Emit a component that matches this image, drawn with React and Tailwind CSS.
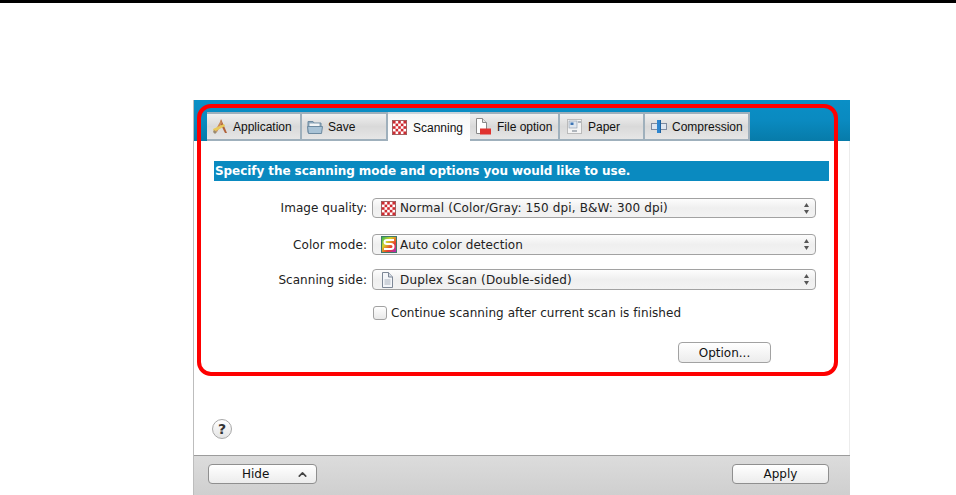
import { ChevronUp } from "lucide-react";

const uiFont = "font-['DejaVu_Sans',sans-serif]";

function CheckerIcon({ size = 15 }) {
  const cells = [];
  for (let y = 0; y < 5; y++) {
    for (let x = 0; x < 5; x++) {
      if ((x + y) % 2 === 0) cells.push(<rect key={`${x}-${y}`} x={1 + x * 2.8} y={1 + y * 2.8} width="2.8" height="2.8" fill="#cf2a30" />);
    }
  }
  return (
    <svg width={size} height={size} viewBox="0 0 16 16" className="shrink-0">
      <rect x="0.5" y="0.5" width="15" height="15" fill="#fff" stroke="#9a5a5a" />
      {cells}
    </svg>
  );
}

function AppIcon() {
  return (
    <svg width="17" height="17" viewBox="0 0 17 17" className="shrink-0">
      <path d="M9 1 L15 15 L13 15 L8 5 Z" fill="#b0623a" />
      <path d="M9 2 L3 13 L5 14 L10 5 Z" fill="#c98a5a" />
      <path d="M1 11 L12 6 L13 8 L2 14 Z" fill="#e8c95a" />
      <path d="M1 14 L3 16 L5 14 L2 12 Z" fill="#9c8a70" />
    </svg>
  );
}

function FolderIcon() {
  return (
    <svg width="16" height="14" viewBox="0 0 16 14" className="shrink-0">
      <path d="M1 3 V1.5 H6 L7 3 H14 V12.5 H1 Z" fill="#8fa9bd" stroke="#6d8aa0" />
      <rect x="2.5" y="3.5" width="10" height="3" fill="#f3f5f6" />
      <path d="M0.5 6.5 H15.5 L14.5 13.5 H1.5 Z" fill="#a9c3d6" stroke="#6d8aa0" />
    </svg>
  );
}

function FileIcon() {
  return (
    <svg width="16" height="17" viewBox="0 0 16 17" className="shrink-0">
      <path d="M1.5 0.5 H7.5 L11.5 4.5 V15.5 H1.5 Z" fill="#fff" stroke="#8a8a8a" />
      <path d="M7.5 0.5 V4.5 H11.5" fill="#e6e6e6" stroke="#8a8a8a" />
      <rect x="5" y="10.5" width="11" height="6" fill="#e0322e" />
    </svg>
  );
}

function PaperIcon() {
  return (
    <svg width="15" height="15" viewBox="0 0 15 15" className="shrink-0">
      <rect x="0.5" y="0.5" width="14" height="14" fill="#f4f4f4" stroke="#8c8c8c" strokeDasharray="1 1" />
      <rect x="2" y="2" width="8" height="7" fill="#dfe6ee" stroke="#8b98a8" strokeWidth="0.6" />
      <rect x="3.5" y="3.5" width="3" height="2.5" fill="#3c74b4" />
      <path d="M11 3 H14 M5 12 H10" stroke="#6d7885" />
    </svg>
  );
}

function CompressIcon() {
  return (
    <svg width="16" height="13" viewBox="0 0 16 13" className="shrink-0">
      <rect x="0.5" y="3.5" width="15" height="6" fill="#dfe6f0" stroke="#7c8aa0" />
      <rect x="6" y="0" width="4" height="13" fill="#2f86cf" />
      <rect x="9" y="0" width="1" height="13" fill="#1b5f9e" />
    </svg>
  );
}

function ColorIcon() {
  return (
    <svg width="16" height="17" viewBox="0 0 16 17" className="shrink-0">
      <defs>
        <linearGradient id="rainbow" x1="0" y1="0" x2="1" y2="1">
          <stop offset="0" stopColor="#1fb35a" />
          <stop offset="0.35" stopColor="#d4d42a" />
          <stop offset="0.65" stopColor="#ea3f2a" />
          <stop offset="1" stopColor="#a624d0" />
        </linearGradient>
      </defs>
      <rect x="0.5" y="0.5" width="15" height="16" fill="url(#rainbow)" stroke="#3f7a6a" />
      <path d="M13 4 H6 Q3.5 4 3.5 6 Q3.5 8 6 8 H10 Q12.5 8 12.5 10.5 Q12.5 13 10 13 H3" fill="none" stroke="#fff" strokeWidth="2" />
    </svg>
  );
}

function PageIcon() {
  return (
    <svg width="13" height="16" viewBox="0 0 13 16" className="shrink-0">
      <path d="M1.5 0.5 H7.5 L11.5 5 V15.5 H1.5 Z" fill="#f4f6f9" stroke="#7d8796" />
      <path d="M7.5 0.5 V5 H11.5" fill="#d4dae3" stroke="#7d8796" />
      <path d="M3.5 8 H9.5 M3.5 10 H9.5 M3.5 12 H9.5" stroke="#a9b1bd" />
    </svg>
  );
}

function Tab({ icon, label, width, gap, pl, active }) {
  return (
    <div
      className={`${width} ${gap} ${pl} h-[29px] flex items-center font-['Liberation_Sans',sans-serif] text-[12px] text-[#111] border-t-2 ${
        active
          ? "bg-gradient-to-b from-[#f6f6f6] to-white border-[#c9d3da]"
          : "bg-gradient-to-b from-[#f0f0f0] via-[#d9d9d9] to-[#e6e6e6] border-r-2 border-b-2 border-[#9fb0bc]"
      }`}
    >
      {icon}
      <span>{label}</span>
    </div>
  );
}

function Arrows() {
  return (
    <svg width="7" height="11" viewBox="0 0 7 11" className="shrink-0">
      <path d="M3.5 0 L6 4 H1 Z" fill="#555" />
      <path d="M3.5 11 L6 7 H1 Z" fill="#555" />
    </svg>
  );
}

function SelectRow({ label, icon, value, gap, height = "h-[20px]", valueClass = "", className = "" }) {
  return (
    <div className={`flex items-center ${uiFont} text-[12px] tracking-[0.06px] text-[#222] ${className}`}>
      <span className="w-[154px] text-right whitespace-nowrap">{label}</span>
      <div className={`ml-[5px] w-[444px] ${height} flex items-center ${gap} pl-[8px] pr-[5px] rounded-[4px] border border-[#a2a2a2] bg-gradient-to-b from-[#fdfdfd] via-[#efefef] to-[#f3f3f3]`}>
        {icon}
        <span className={`flex-1 whitespace-nowrap ${valueClass}`}>{value}</span>
        <Arrows />
      </div>
    </div>
  );
}

export default function App() {
  return (
    <div className="w-[956px] h-[495px] flex flex-col bg-white overflow-hidden">
      <div className="h-[3px] bg-black" />

      <div className="flex-1 pt-[97px] pl-[193px]">
        <div className="relative w-[657px] h-[395px] flex flex-col border-l border-[#bdbdbd] border-r-0">
          {/* Tab strip */}
          <div className="h-[41px] flex items-end pl-[13px] bg-gradient-to-b from-[#0a8fc6] via-[#0a8ac0] to-[#077ba9] shrink-0">
            <Tab icon={<AppIcon />} label="Application" width="w-[95px]" gap="gap-[4px]" pl="pl-[5px]" />
            <Tab icon={<FolderIcon />} label="Save" width="w-[86px]" gap="gap-[5px]" pl="pl-[5px]" />
            <Tab icon={<CheckerIcon />} label="Scanning" width="w-[82px]" gap="gap-[6px]" pl="pl-[4px]" active />
            <Tab icon={<FileIcon />} label="File option" width="w-[90px]" gap="gap-[6px]" pl="pl-[5px]" />
            <Tab icon={<PaperIcon />} label="Paper" width="w-[85px]" gap="gap-[6px]" pl="pl-[7px]" />
            <Tab icon={<CompressIcon />} label="Compression" width="w-[105px]" gap="gap-[5px]" pl="pl-[6px]" />
          </div>

          {/* Scanning panel */}
          <div className="flex-1 flex flex-col pt-[20px] pl-[20px] border-r border-[#ececec]">
            <div className={`w-[615px] h-[20px] flex items-center pl-[1px] bg-[#0a8ac0] text-white font-bold text-[12px] tracking-[-0.07px] whitespace-nowrap ${uiFont}`}>
              Specify the scanning mode and options you would like to use.
            </div>

            <div className="mt-[17px] flex flex-col gap-[15px] -ml-[1px]">
              <SelectRow label="Image quality:" icon={<CheckerIcon />} value="Normal (Color/Gray: 150 dpi, B&W: 300 dpi)" gap="gap-[4px]" valueClass="tracking-[0.13px]" className="mb-[1px]" />
              <SelectRow label="Color mode:" icon={<ColorIcon />} value="Auto color detection" gap="gap-[3px]" height="h-[21px]" className="-mb-[1px]" />
              <SelectRow label="Scanning side:" icon={<PageIcon />} value="Duplex Scan (Double-sided)" gap="gap-[6px]" height="h-[21px]" valueClass="tracking-[0.18px]" />
            </div>

            <div className={`mt-[14px] ml-[159px] flex items-center gap-[4px] ${uiFont} text-[12px] tracking-[0.06px] text-[#222]`}>
              <span className="w-[14px] h-[14px] rounded-[3px] border border-[#a2a2a2] bg-gradient-to-b from-white to-[#e9e9e9]" />
              <span className="whitespace-nowrap">Continue scanning after current scan is finished</span>
            </div>

            <div className="mt-[20px] ml-[464px]">
              <div className={`w-[93px] h-[21px] flex items-center justify-center rounded-[4px] border border-[#a2a2a2] bg-gradient-to-b from-white to-[#ececec] ${uiFont} text-[12px] text-[#111]`}>
                Option...
              </div>
            </div>

            <div className={`mt-[56px] -ml-[2px] w-[20px] h-[20px] rounded-full border border-[#a8a8a8] bg-gradient-to-b from-white to-[#e4e4e4] flex items-center justify-center font-bold text-[14px] text-[#333] ${uiFont}`}>
              ?
            </div>
          </div>

          {/* Footer */}
          <div className="h-[40px] shrink-0 flex items-start justify-between pt-[8px] pl-[14px] pr-[21px] border-t border-[#9c9c9c] bg-gradient-to-b from-[#dcdcdc] to-[#cfcfcf]">
            <div className={`w-[109px] h-[20px] flex items-center pl-[33px] pr-[7px] justify-between rounded-[4px] border border-[#8f8f8f] bg-gradient-to-b from-white to-[#ececec] ${uiFont} text-[12px] text-[#111]`}>
              <span>Hide</span>
              <ChevronUp size={13} strokeWidth={3} className="text-[#444]" />
            </div>
            <div className={`w-[97px] h-[20px] flex items-center justify-center rounded-[4px] border border-[#8f8f8f] bg-gradient-to-b from-white to-[#ececec] ${uiFont} text-[12px] text-[#111]`}>
              Apply
            </div>
          </div>

          {/* Red highlight over the panel */}
          <div className="absolute left-[3px] top-[4px] w-[641px] h-[272px] rounded-[14px] border-4 border-[#fe0000] pointer-events-none" />
        </div>
      </div>
    </div>
  );
}
